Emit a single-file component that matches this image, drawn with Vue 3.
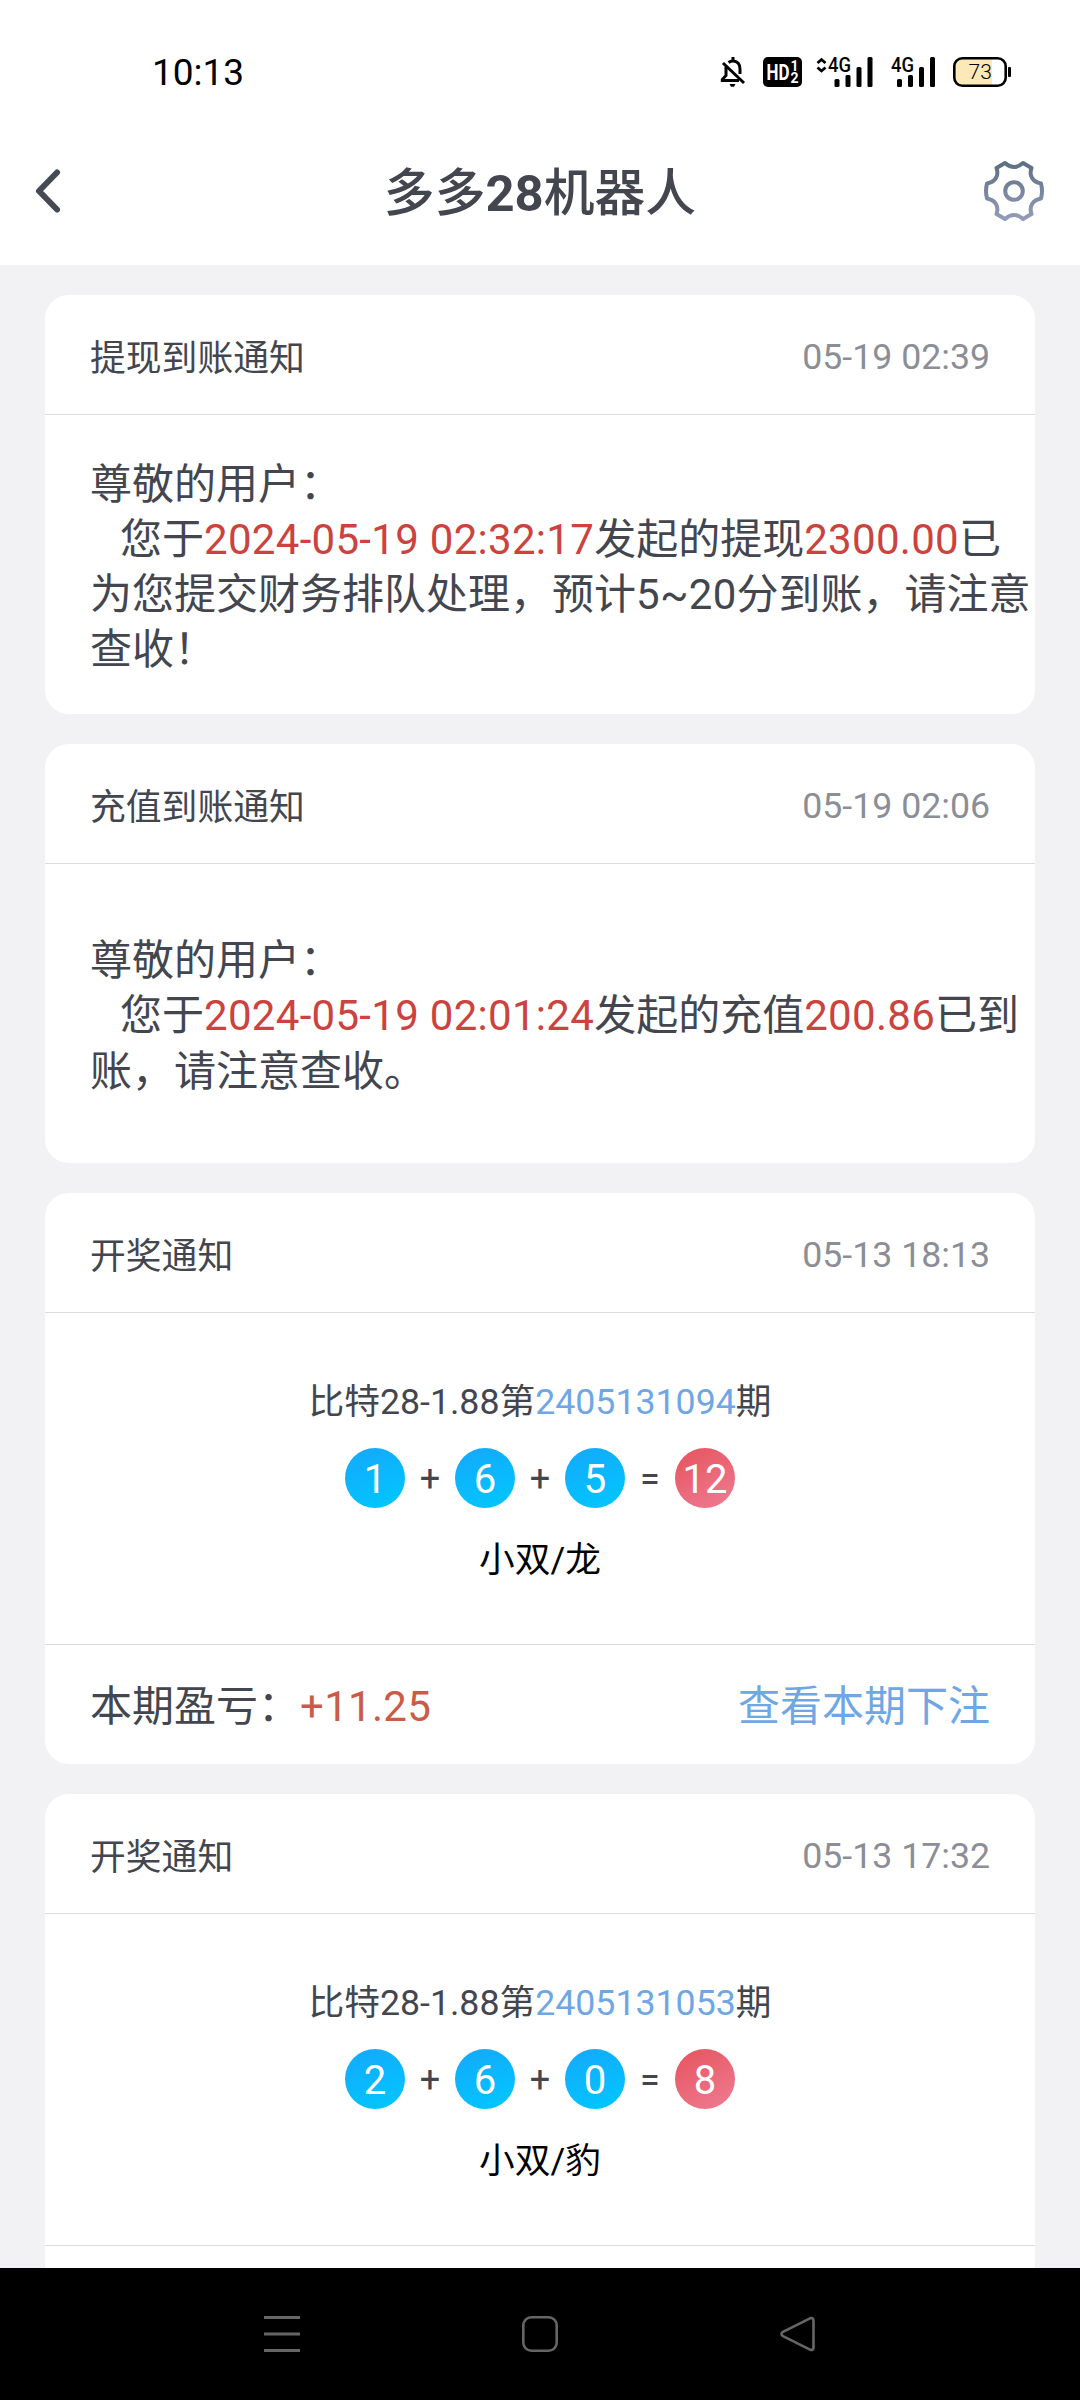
<script setup>
const notices = [
  {
    title: '提现到账通知',
    time: '05-19 02:39',
    lines: [
      [{ t: '尊敬的用户：' }],
      [{ t: '您于', indent: true }, { t: '2024-05-19 02:32:17', hot: true }, { t: '发起的提现' }, { t: '2300.00', hot: true }, { t: '已' }],
      [{ t: '为您提交财务排队处理，预计' }, { t: '5~20', num: true }, { t: '分到账，请注意' }],
      [{ t: '查收！' }],
    ],
  },
  {
    title: '充值到账通知',
    time: '05-19 02:06',
    lines: [
      [{ t: '尊敬的用户：' }],
      [{ t: '您于', indent: true }, { t: '2024-05-19 02:01:24', hot: true }, { t: '发起的充值' }, { t: '200.86', hot: true }, { t: '已到' }],
      [{ t: '账，请注意查收。' }],
    ],
  },
  { title: '开奖通知', time: '05-13 18:13', issue: '2405131094', balls: [1, 6, 5], sum: 12, result: '小双/龙', profit: '+11.25' },
  { title: '开奖通知', time: '05-13 17:32', issue: '2405131053', balls: [2, 6, 0], sum: 8, result: '小双/豹' },
]
const bars = [
  { x: 0, y: 22 },
  { x: 11, y: 18 },
  { x: 22, y: 10 },
  { x: 33, y: 0 },
]
</script>

<template>
  <div class="screen">
    <div class="status">
      <span class="clock">10:13</span>
      <div class="indicators">
        <svg class="bell" width="26" height="30" viewBox="0 0 26 30" fill="none" stroke="#000" stroke-width="3">
          <path d="M8.500 5.500C10 4.300 11.500 4 13 4C17.500 4 20 7.500 20 12V17" />
          <path d="M6 9.500V18.500L2.300 22.500V23.500H19" />
          <path d="M13 0V4" />
          <path d="M3 6L24 26" />
          <path d="M9.500 27H15.500L14 29.800H11Z" fill="#000" stroke="none" />
        </svg>
        <svg class="hd" width="39" height="30" viewBox="0 0 39 30">
          <rect width="39" height="30" rx="5" />
          <text x="3.500" y="23" font-size="22.500" font-weight="700" textLength="23" lengthAdjust="spacingAndGlyphs" fill="#fff">HD</text>
          <text x="27.500" y="14" font-size="14" font-weight="700" fill="#fff">1</text>
          <text x="27.500" y="25.500" font-size="14" font-weight="700" fill="#fff">2</text>
        </svg>
        <svg class="sig1" width="57" height="30" viewBox="0 0 57 30">
          <path d="M1.500 6L5.500 2.500L9.500 6M1.500 10.500L5.500 14L9.500 10.500" fill="none" stroke="#000" stroke-width="2.800" />
          <text x="12" y="15" font-size="20" font-weight="500" textLength="23" lengthAdjust="spacingAndGlyphs">4G</text>
          <rect v-for="b in bars" :key="b.x" :x="b.x + 18.500" :y="b.y" width="5" :height="30 - b.y" rx="1.500" />
        </svg>
        <svg class="sig2" width="45" height="30" viewBox="0 0 45 30">
          <text x="0" y="15" font-size="20" font-weight="500" textLength="23" lengthAdjust="spacingAndGlyphs">4G</text>
          <rect v-for="b in bars" :key="b.x" :x="b.x + 6" :y="b.y" width="5" :height="30 - b.y" rx="1.500" />
        </svg>
        <svg width="59" height="30" viewBox="0 0 59 30">
          <path d="M39 2H10A8 8 0 0 0 2 10V20A8 8 0 0 0 10 28H39Z" fill="#fde8b8" />
          <rect x="1.300" y="1.300" width="51.400" height="27.400" rx="8" fill="none" stroke="#000" stroke-width="2.600" />
          <rect x="55" y="10" width="3" height="10" rx="1" />
          <text x="15.500" y="22.200" font-size="21" font-weight="300">73</text>
        </svg>
      </div>
    </div>

    <div class="nav">
      <svg width="30" height="46" viewBox="0 0 30 46" fill="none" stroke="#454a54" stroke-width="6" stroke-linecap="round" stroke-linejoin="round">
        <path d="M24 4.500L6 23L24 41.500" />
      </svg>
      <h1>多多<b>28</b>机器人</h1>
      <svg class="gear" width="64" height="64" viewBox="-32 -32 64 64" fill="none" stroke="url(#gearTone)" stroke-width="4" stroke-linejoin="round">
        <defs>
          <linearGradient id="gearTone" gradientUnits="userSpaceOnUse" x1="0" y1="-30" x2="0" y2="30">
            <stop offset="0" stop-color="#5c6d83" />
            <stop offset="1" stop-color="#959db8" />
          </linearGradient>
        </defs>
        <path d="M-9-28Q0-20 9-28L17.500-23C15-16 18-9 27-7.500Q29 0 27 7.500C18 9 15 16 17.500 23L9 28Q0 20-9 28L-17.500 23C-15 16-18 9-27 7.500Q-29 0-27-7.500C-18-9-15-16-17.500-23Z" />
        <circle r="8.800" />
      </svg>
    </div>

    <main class="list">
      <section v-for="n in notices" :key="n.time" class="card" :class="{ draw: n.balls }">
        <header>
          <span>{{ n.title }}</span>
          <time>{{ n.time }}</time>
        </header>
        <div v-if="n.lines" class="message">
          <p v-for="(line, i) in n.lines" :key="i"><span v-for="(s, j) in line" :key="j" :class="{ hot: s.hot, num: s.num, indent: s.indent }">{{ s.t }}</span></p>
        </div>
        <template v-else>
          <div class="result">
            <p class="issue">比特28-1.88第<span class="link">{{ n.issue }}</span>期</p>
            <div class="sum">
              <template v-for="(b, i) in n.balls" :key="i">
                <span class="ball">{{ b }}</span>
                <span class="op">{{ i < 2 ? '+' : '=' }}</span>
              </template>
              <span class="ball red">{{ n.sum }}</span>
            </div>
            <p class="kind">{{ n.result }}</p>
          </div>
          <footer>
            <template v-if="n.profit">
              <span>本期盈亏：<span class="profit">{{ n.profit }}</span></span>
              <span class="link">查看本期下注</span>
            </template>
          </footer>
        </template>
      </section>
    </main>

    <div class="keys">
      <svg width="36" height="36" viewBox="0 0 36 36" fill="#666"><path d="M0 0H36V3H0ZM0 16.500H36V19.500H0ZM0 33H36V36H0Z" /></svg>
      <svg width="36" height="36" viewBox="0 0 36 36" fill="none" stroke="#666" stroke-width="2.600"><rect x="1.300" y="1.300" width="33.400" height="33.400" rx="8" /></svg>
      <svg width="36" height="36" viewBox="0 0 36 36" fill="none" stroke="#666" stroke-width="2.600" stroke-linejoin="round"><path d="M2.500 16.200L30 2.300Q33.500 1.500 33.500 4.500V31.500Q33.500 34.500 30 33.700L2.500 19.800Q0.500 18 2.500 16.200Z" /></svg>
    </div>
  </div>
</template>

<style>
body {
  margin: 0;
}
</style>

<style scoped>
.screen {
  width: 1080px;
  height: 2400px;
  display: flex;
  flex-direction: column;
  overflow: hidden;
  background: #f2f2f4;
  color: #43464f;
  font-family: Roboto, "Noto Sans CJK SC", sans-serif;
}
p,
h1 {
  margin: 0;
}
svg {
  display: block;
  flex: none;
  overflow: visible;
}
.status {
  height: 144px;
  box-sizing: border-box;
  padding: 57px 68px 0 152px;
  display: flex;
  align-items: flex-start;
  justify-content: space-between;
  background: #fff;
  color: #000;
  flex: none;
}
.clock {
  font-size: 37px;
  line-height: 32px;
}
.indicators {
  display: flex;
}
.bell {
  margin-right: 17px;
}
.hd {
  margin-right: 14px;
}
.sig1 {
  margin-right: 18px;
}
.sig2 {
  margin-right: 17px;
}
.nav {
  height: 121px;
  box-sizing: border-box;
  padding: 0 34px 28px 33px;
  display: flex;
  align-items: center;
  justify-content: space-between;
  background: #fff;
  flex: none;
}
.nav h1 {
  font-size: 50.8px;
  line-height: 60px;
  font-weight: 500;
  padding: 6px 0 0 35px;
}
.list {
  flex: 1;
  min-height: 0;
  padding: 30px 45px 0;
  display: flex;
  flex-direction: column;
  gap: 30px;
  overflow: hidden;
}
.card {
  flex: none;
  height: 419px;
  display: flex;
  flex-direction: column;
  border-radius: 24px;
  background: #fff;
}
.card.draw {
  height: 571px;
}
header,
footer {
  flex: none;
  height: 120px;
  box-sizing: border-box;
  padding: 0 45px;
  display: flex;
  align-items: center;
  justify-content: space-between;
}
header {
  border-bottom: 1px solid #dcdcde;
  font-size: 35.8px;
}
time {
  padding-top: 4px;
  font-size: 35.7px;
  color: #8b8e96;
}
.message {
  flex: 1;
  padding: 5px 0 0 45px;
  display: flex;
  flex-direction: column;
  justify-content: center;
  font-size: 42px;
  line-height: 55.25px;
  white-space: nowrap;
}
.message p {
  height: 55.25px;
}
.indent {
  margin-left: 30px;
}
.hot,
.num {
  letter-spacing: 0.3px;
}
.hot {
  color: #cb423e;
}
.result {
  flex: 1;
  padding-top: 4px;
  display: flex;
  flex-direction: column;
  align-items: center;
  justify-content: center;
}
.issue,
.kind {
  font-size: 35.7px;
  line-height: 48px;
}
.kind {
  color: #000;
}
.sum {
  margin: 22px 0 28px;
  display: flex;
  align-items: center;
}
.ball {
  width: 60px;
  height: 60px;
  border-radius: 50%;
  background: linear-gradient(160deg, #15a8fb, #00c8ff);
  color: #fff;
  font-size: 40px;
  line-height: 63px;
  text-align: center;
}
.ball.red {
  background: linear-gradient(150deg, #e6535d, #ef7c93);
}
.op {
  width: 50px;
  padding-top: 3px;
  text-align: center;
  font-size: 36px;
}
footer {
  padding-bottom: 5px;
  border-top: 1px solid #dcdcde;
  font-size: 42px;
}
.link {
  color: #6fa6e4;
}
.profit {
  letter-spacing: 0.3px;
  color: #cc5b45;
}
.keys {
  flex: none;
  height: 132px;
  box-sizing: border-box;
  padding: 0 264px;
  display: flex;
  align-items: center;
  justify-content: space-between;
  background: #000;
}
</style>
